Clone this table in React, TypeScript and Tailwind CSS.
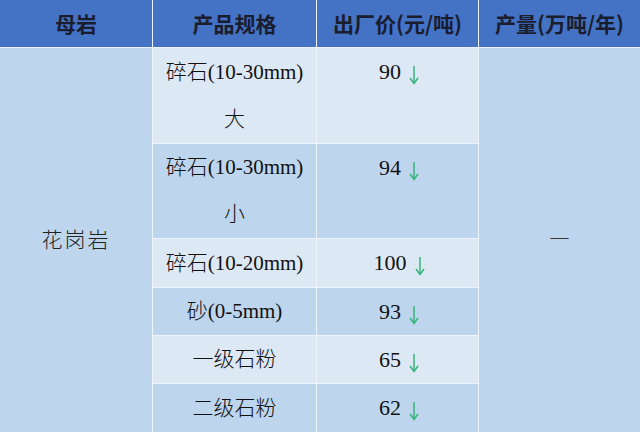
import React from "react";

const LIGHT = "bg-[#dde8f5]";
const DARK = "bg-[#bdd6ee]";

function Arrow() {
  return (
    <svg width="12" height="20" viewBox="0 0 12 20" className="ml-[7px] mt-[6px]">
      <path d="M6 1 V18" stroke="#34b37a" strokeWidth="1.5" fill="none" />
      <path d="M2 13 L6 18.5 L10 13" stroke="#34b37a" strokeWidth="1.5" fill="none" />
    </svg>
  );
}

function Spec({ lines, bg }: { lines: string[]; bg: string }) {
  return (
    <div
      className={`${bg} flex flex-col items-center justify-center text-[21px] leading-[47px] font-light text-[#111] font-['Liberation_Serif','Noto_Sans_CJK_SC',serif]`}
    >
      {lines.map((l, i) => (
        <div key={i}>{l}</div>
      ))}
    </div>
  );
}

function Price({ v, bg }: { v: string; bg: string }) {
  return (
    <div className={`${bg} flex flex-col items-center justify-start`}>
      <div className="flex items-center h-[47px] pl-[4px] text-[22px] text-[#111] font-['Liberation_Serif',serif]">
        <span>{v}</span>
        <Arrow />
      </div>
    </div>
  );
}

const head =
  "bg-[#4472c4] flex items-center justify-center text-[21px] font-bold text-[#1a1d2e] font-['Noto_Sans_CJK_SC','Noto_Sans',sans-serif]";

export default function App() {
  return (
    <div className="w-[640px] h-[432px] overflow-hidden bg-[#eef4fb]">
      <div className="grid grid-cols-[152px_163px_161px_1fr] grid-rows-[47px_95px_94px_48px_47px_47px_48px] gap-px">
        <div className={head}>母岩</div>
        <div className={head}>产品规格</div>
        <div className={head}>出厂价(元/吨)</div>
        <div className={head}>产量(万吨/年)</div>

        <div className={`${DARK} row-span-6 flex items-center justify-center pt-[2px] text-[21px] font-light tracking-[2px] text-[#222] font-['Liberation_Serif','Noto_Sans_CJK_SC',serif]`}>
          花岗岩
        </div>
        <Spec lines={["碎石(10-30mm)", "大"]} bg={LIGHT} />
        <Price v="90" bg={LIGHT} />
        <div className={`${DARK} row-span-6 flex items-center justify-center pb-[6px] text-[18px] text-[#333] font-['Liberation_Serif',serif]`}>
          —
        </div>

        <Spec lines={["碎石(10-30mm)", "小"]} bg={DARK} />
        <Price v="94" bg={DARK} />

        <Spec lines={["碎石(10-20mm)"]} bg={LIGHT} />
        <Price v="100" bg={LIGHT} />

        <Spec lines={["砂(0-5mm)"]} bg={DARK} />
        <Price v="93" bg={DARK} />

        <Spec lines={["一级石粉"]} bg={LIGHT} />
        <Price v="65" bg={LIGHT} />

        <Spec lines={["二级石粉"]} bg={DARK} />
        <Price v="62" bg={DARK} />
      </div>
    </div>
  );
}
